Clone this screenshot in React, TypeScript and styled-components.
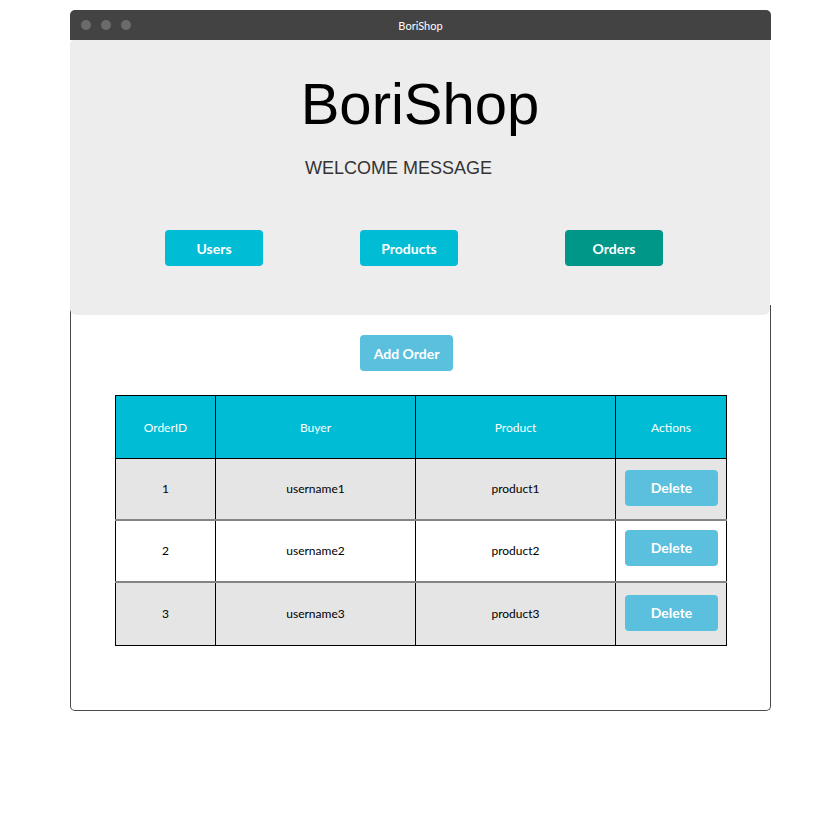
import React from "react";
import styled, { createGlobalStyle } from "styled-components";

const Global = createGlobalStyle`
  html, body { margin: 0; padding: 0; background: #ffffff; }
  body { font-family: "Lato", "Open Sans", sans-serif; }
`;

const Page = styled.div`
  padding: 10px 0 0 70px;
`;

const Window = styled.div`
  width: 701px;
  display: flex;
  flex-direction: column;
`;

const TitleBar = styled.div`
  height: 30px;
  background: #434343;
  border-radius: 5px 5px 0 0;
  display: flex;
  align-items: center;
  position: relative;
  padding-left: 11px;
  gap: 10px;
`;

const Dot = styled.span`
  width: 10px;
  height: 10px;
  border-radius: 50%;
  background: #6b6b6b;
`;

const TitleText = styled.div`
  position: absolute;
  left: 0;
  right: 0;
  text-align: center;
  color: #ffffff;
  font-size: 11px;
  font-family: "Lato", sans-serif;
  pointer-events: none;
`;

const Header = styled.header`
  position: relative;
  z-index: 1;
  background: #ededed;
  border-radius: 4px 0 6px 6px;
  height: 275px;
  margin-right: 1px;
  box-sizing: border-box;
  padding-top: 35px;
  display: flex;
  flex-direction: column;
  align-items: center;
`;

const Title = styled.h1`
  margin: 0;
  font-family: "Liberation Sans", Arial, sans-serif;
  font-weight: 400;
  font-size: 58px;
  line-height: 1;
  color: #000000;
`;

const Welcome = styled.p`
  align-self: flex-start;
  margin: 26px 0 0 235px;
  font-family: "Liberation Sans", Arial, sans-serif;
  font-size: 18px;
  line-height: 1;
  color: #333333;
`;

const NavRow = styled.nav`
  align-self: stretch;
  display: flex;
  gap: 97px;
  padding-left: 95px;
  margin-top: 53px;
`;

const NavButton = styled.button<{ $active?: boolean; $shift?: number }>`
  width: 98px;
  height: 36px;
  border: none;
  border-radius: 4px;
  background: ${(p) => (p.$active ? "#009688" : "#00bcd4")};
  color: #ffffff;
  font-family: "Lato", sans-serif;
  font-weight: 700;
  font-size: 14px;
  margin-left: ${(p) => p.$shift ?? 0}px;
  cursor: pointer;
`;

const Body = styled.main`
  margin-top: -10px;
  box-sizing: border-box;
  height: 406px;
  border: 1px solid #4a4a4a;
  border-top: none;
  border-radius: 0 0 5px 5px;
  padding: 30px 0 0 44px;
  display: flex;
  flex-direction: column;
`;

const AddButton = styled.button`
  align-self: flex-start;
  margin-left: 245px;
  width: 93px;
  height: 36px;
  border: none;
  border-radius: 4px;
  background: #5bc0de;
  color: #ffffff;
  font-family: "Lato", sans-serif;
  font-weight: 700;
  font-size: 14px;
`;

const Table = styled.table`
  margin-top: 24px;
  border-collapse: collapse;
  width: 611px;
  table-layout: fixed;
  font-family: "Lato", sans-serif;
  font-size: 12px;
  border: 1px solid #000000;

  tbody tr + tr td {
    border-top: 2px solid #858585;
  }
`;

const HeadCell = styled.th<{ $w: number }>`
  width: ${(p) => p.$w}px;
  height: 62px;
  padding: 0;
  background: #00bcd4;
  color: #ffffff;
  font-weight: 400;
  border: 1px solid #000000;
  text-align: center;
`;

const Row = styled.tr<{ $shade: boolean; $h: number }>`
  height: ${(p) => p.$h}px;
  background: ${(p) => (p.$shade ? "#e5e5e5" : "#ffffff")};
`;

const Cell = styled.td`
  padding: 0;
  text-align: center;
  vertical-align: middle;
  color: #000000;
  border-left: 1px solid #000000;
  border-right: 1px solid #000000;
`;

const ActionCell = styled(Cell)<{ $lift: number }>`
  text-align: left;
  padding: 0 7px ${(p) => p.$lift}px 9px;
`;

const DeleteButton = styled.button`
  width: 93px;
  height: 36px;
  border: none;
  border-radius: 4px;
  background: #5bc0de;
  color: #ffffff;
  font-family: "Lato", sans-serif;
  font-weight: 700;
  font-size: 14px;
  display: block;
`;

const orders = [
  { id: 1, buyer: "username1", product: "product1", h: 61, lift: 2 },
  { id: 2, buyer: "username2", product: "product2", h: 62, lift: 6 },
  { id: 3, buyer: "username3", product: "product3", h: 64, lift: 2 },
];

export default function App() {
  return (
    <Page>
      <Global />
      <Window>
        <TitleBar>
          <Dot />
          <Dot />
          <Dot />
          <TitleText>BoriShop</TitleText>
        </TitleBar>
        <Header>
          <Title>BoriShop</Title>
          <Welcome>WELCOME MESSAGE</Welcome>
          <NavRow>
            <NavButton>Users</NavButton>
            <NavButton>Products</NavButton>
            <NavButton $active $shift={10}>
              Orders
            </NavButton>
          </NavRow>
        </Header>
        <Body>
          <AddButton>Add Order</AddButton>
          <Table>
            <thead>
              <tr>
                <HeadCell $w={99}>OrderID</HeadCell>
                <HeadCell $w={199}>Buyer</HeadCell>
                <HeadCell $w={199}>Product</HeadCell>
                <HeadCell $w={110}>Actions</HeadCell>
              </tr>
            </thead>
            <tbody>
              {orders.map((o, i) => (
                <Row key={o.id} $shade={i % 2 === 0} $h={o.h}>
                  <Cell>{o.id}</Cell>
                  <Cell>{o.buyer}</Cell>
                  <Cell>{o.product}</Cell>
                  <ActionCell $lift={o.lift}>
                    <DeleteButton>Delete</DeleteButton>
                  </ActionCell>
                </Row>
              ))}
            </tbody>
          </Table>
        </Body>
      </Window>
    </Page>
  );
}
